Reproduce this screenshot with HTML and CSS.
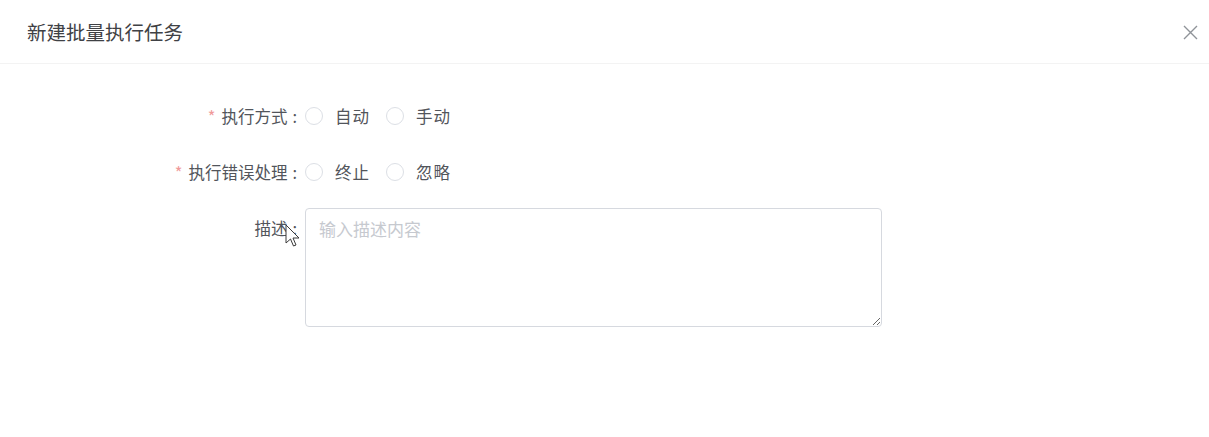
FILE: index.html
```html
<!DOCTYPE html>
<html lang="zh">
<head>
<meta charset="UTF-8">
<meta name="viewport" content="width=device-width, initial-scale=1.0">
<title>新建批量执行任务</title>
<link rel="stylesheet" href="styles.css">
</head>
<body>
  <div class="dialog">
    <div class="dialog-header">
      <span class="dialog-title">新建批量执行任务</span>
      <button type="button" class="dialog-close" aria-label="关闭">
        <svg width="15" height="15" viewBox="0 0 15 15">
          <path d="M1 1 L14 14 M14 1 L1 14" stroke="#8f9399" stroke-width="1.4" fill="none"/>
        </svg>
      </button>
    </div>

    <div class="dialog-body">
      <form class="form" id="task-form">
        <div class="form-item">
          <label class="form-label is-required">执行方式<span class="colon">:</span></label>
          <div class="form-content">
            <label class="radio"><span class="radio-circle"></span><span class="radio-text">自动</span></label>
            <label class="radio"><span class="radio-circle"></span><span class="radio-text">手动</span></label>
          </div>
        </div>

        <div class="form-item">
          <label class="form-label is-required">执行错误处理<span class="colon">:</span></label>
          <div class="form-content">
            <label class="radio"><span class="radio-circle"></span><span class="radio-text">终止</span></label>
            <label class="radio"><span class="radio-circle"></span><span class="radio-text">忽略</span></label>
          </div>
        </div>

        <div class="form-item">
          <label class="form-label" for="task-desc">描述<span class="colon">:</span></label>
          <div class="form-content">
            <textarea id="task-desc" class="textarea" placeholder="输入描述内容"></textarea>
          </div>
        </div>
      </form>
    </div>
  </div>

  <!-- 鼠标指针 -->
  <svg class="cursor" width="15" height="24" viewBox="0 0 15 24">
    <path d="M1 1 L1 19 L5.5 15 L8.5 22 L11 21 L8 14 L14 14 Z" fill="#fff" stroke="#3a3a3a" stroke-width="1" stroke-linejoin="round"/>
  </svg>
</body>
</html>
```

FILE: styles.css
```css
body {
  margin: 0;
  background-color: #fff;
  font-family: "Noto Sans CJK SC", "Noto Sans", sans-serif;
  color: #5c5f66;
}
.dialog {
  background-color: #fff;
}
.dialog-header {
  height: 63px;
  border-bottom: 1px solid #f3f3f3;
  display: flex;
  align-items: center;
  justify-content: space-between;
  padding: 0 11px 0 27px;
}
.dialog-title {
  font-size: 19.5px;
  color: #3f4145;
}
.dialog-close {
  border: none;
  background: none;
  padding: 0;
  width: 15px;
  height: 15px;
  margin-top: 2px;
  cursor: pointer;
}
.dialog-body {
  padding-top: 32px;
}
.form-item {
  display: flex;
  margin-bottom: 16px;
}
.form-label {
  width: 305px;
  box-sizing: border-box;
  padding-right: 8px;
  text-align: right;
  line-height: 40px;
  font-size: 16.5px;
  color: #52555b;
}
.form-label .colon {
  margin-left: 5px;
}
.form-label.is-required::before {
  content: "*";
  color: #f09a9a;
  margin-right: 6px;
}
.form-content {
  display: flex;
  align-items: center;
  min-height: 40px;
}
.radio {
  display: inline-flex;
  align-items: center;
  margin-right: 16px;
  cursor: pointer;
}
.radio-circle {
  width: 18px;
  height: 18px;
  box-sizing: border-box;
  border: 1px solid #dcdfe5;
  border-radius: 50%;
  margin-right: 12px;
}
.radio-text {
  font-size: 16.5px;
  letter-spacing: 1px;
  color: #52555b;
}
.textarea {
  width: 577px;
  height: 119px;
  box-sizing: border-box;
  padding: 8px 13px;
  border: 1px solid #d6d9df;
  border-radius: 4px;
  font-family: "Noto Sans CJK SC", "Noto Sans", sans-serif;
  font-size: 17px;
  line-height: 24px;
  color: #52555b;
  outline: none;
}
.textarea::placeholder {
  color: #c6c9cf;
}
.cursor {
  position: absolute;
  left: 285px;
  top: 224px;
}
```
